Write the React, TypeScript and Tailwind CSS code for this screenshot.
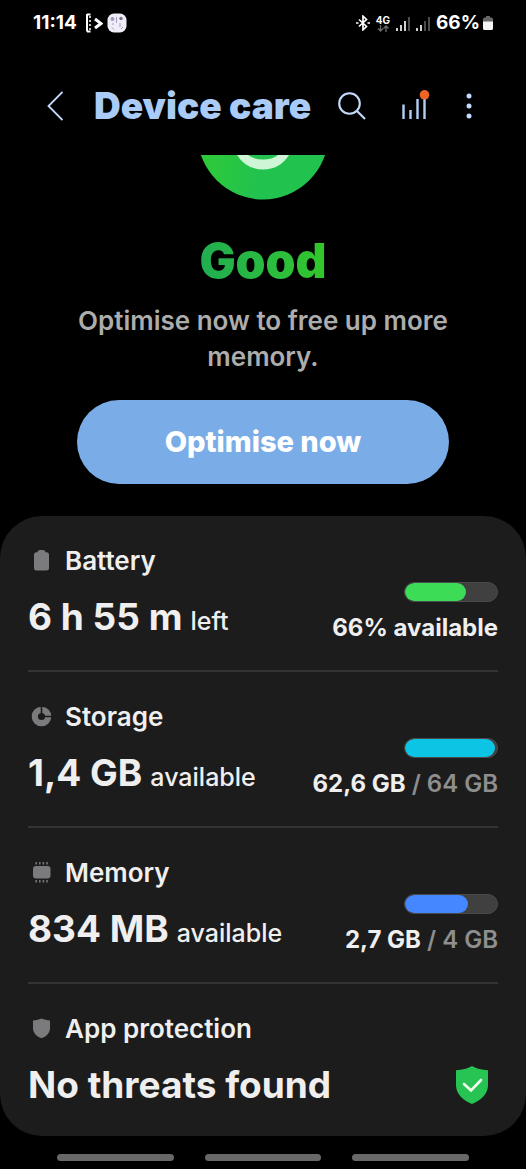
import type { ReactNode } from "react";

const ROWS = [
  {
    title: "Battery",
    icon: <BatteryIcon />,
    value: "6 h 55 m",
    unit: "left",
    percent: 66,
    bar: "bg-[#3ddc57]",
    used: "66% available",
    total: "",
  },
  {
    title: "Storage",
    icon: <StorageIcon />,
    value: "1,4 GB",
    unit: "available",
    percent: 98,
    bar: "bg-[#0cc4e4]",
    used: "62,6 GB",
    total: " / 64 GB",
  },
  {
    title: "Memory",
    icon: <MemoryIcon />,
    value: "834 MB",
    unit: "available",
    percent: 69,
    bar: "bg-[#4587ff]",
    used: "2,7 GB",
    total: " / 4 GB",
  },
];

function BatteryIcon() {
  return (
    <svg viewBox="0 0 24 24" className="size-6" fill="#7b7b7d">
      <path d="M8.500 3.200C8.800 1.900 9.600 1 11 1h3c1.400 0 2.200.900 2.500 2.200h1A2.500 2.500 0 0 1 20 5.700v13.300a2.500 2.500 0 0 1-2.500 2.500h-10A2.500 2.500 0 0 1 5 19V5.700a2.500 2.500 0 0 1 2.500-2.500Z" />
    </svg>
  );
}

function StorageIcon() {
  return (
    <svg viewBox="0 0 24 24" className="size-6" fill="none">
      <circle cx="12.500" cy="11.500" r="6.700" stroke="#7b7b7d" strokeWidth="6.200" />
      <path d="M12.500 11.500V1M12.500 11.500H23" stroke="#1c1c1c" strokeWidth="1.600" />
    </svg>
  );
}

function MemoryIcon() {
  return (
    <svg viewBox="0 0 24 24" className="size-6" fill="#7b7b7d">
      <rect x="4" y="5" width="17.500" height="12.500" rx="3" />
      <path
        d="M7.200 1v2.500M10.800 1v2.500M14.400 1v2.500M18 1v2.500M7.200 19v2.500M10.800 19v2.500M14.400 19v2.500M18 19v2.500"
        stroke="#7b7b7d"
        strokeWidth="1.500"
      />
    </svg>
  );
}

function ShieldIcon() {
  return (
    <svg viewBox="0 0 24 24" className="size-6" fill="#7b7b7d">
      <path d="M12.500 1.500c2.600 1.100 5.200 1.700 8.500 2v7.700c0 4.800-3.800 8.300-8.500 10.100C7.800 19.500 4 16 4 11.200V3.500c3.300-.3 5.900-.9 8.500-2Z" />
    </svg>
  );
}

function SignalIcon({ strong = false }: { strong?: boolean }) {
  return (
    <svg viewBox="0 0 14 15" className="h-[15px] w-[14px]" strokeWidth="1.800">
      <path d="M1 15v-3M5 15V9" stroke="#e8e8e8" />
      <path d="M9 15V5" stroke={strong ? "#e8e8e8" : "#555"} />
      <path d="M13 15V1" stroke="#555" />
    </svg>
  );
}

function StatusBar() {
  return (
    <div className="flex h-[46px] items-center justify-between px-[33px] text-white">
      <div className="flex items-center gap-2">
        <span className="text-[19px] font-bold">11:14</span>
        <div className="flex items-center gap-1">
          <svg viewBox="0 0 18 20" className="h-5 w-[18px]" fill="none" stroke="#fff">
            <path d="M2 1v17.500M2 1.500h3.500M2 18.500h3.500" strokeWidth="2" />
            <path d="M5 3v14" strokeWidth="1.500" strokeDasharray="2 2" />
            <path d="m10 6 6 4.500-6 4.500" strokeWidth="3" />
          </svg>
          <svg viewBox="0 0 20 20" className="size-5">
            <rect x="0.500" y="0.500" width="19" height="19" rx="6.500" fill="#f1edf8" />
            <circle cx="5.500" cy="6" r="2" fill="#a39cb8" />
            <circle cx="14" cy="5.500" r="1.700" fill="#77738a" />
            <path d="M9.500 4v6M13 10v4M5 14.500l2 2M14 16l2-2M5 11h2" stroke="#a39cb8" fill="none" />
          </svg>
        </div>
      </div>
      <div className="flex items-center gap-[6px]">
        <svg viewBox="0 0 14 16" className="h-4 w-[14px]" fill="none" stroke="#fff" strokeWidth="1.700">
          <path d="m3 4.500 7.500 7L7 14.800V1.200l3.500 3.300-7.500 7" />
          <path d="M0 8h2.500M11.500 8H14" />
        </svg>
        <div className="flex flex-col items-center">
          <span className="text-[10px] leading-[10px] font-bold">4G</span>
          <svg viewBox="0 0 12 7" className="h-[7px] w-3" fill="none" stroke="#6b6b6b" strokeWidth="1.300">
            <path d="M3.500 0v6M1 3.500l2.500 2.500L6 3.500M9 7V1M6.500 3.500 9 1l2.500 2.500" />
          </svg>
        </div>
        <SignalIcon strong />
        <SignalIcon />
        <div className="flex items-center gap-[3px]">
          <span className="text-[19px] font-bold">66%</span>
          <svg viewBox="0 0 10 14" className="h-[14px] w-[10px]">
            <path d="M3 0h4v1.500h1.500A1.500 1.500 0 0 1 10 3v3H0V3a1.500 1.500 0 0 1 1.500-1.500H3Z" fill="#666" />
            <path d="M0 5.500h10v7A1.500 1.500 0 0 1 8.500 14h-7A1.500 1.500 0 0 1 0 12.500Z" fill="#f4f4f4" />
          </svg>
        </div>
      </div>
    </div>
  );
}

function Header() {
  return (
    <header className="flex h-[109px] items-center pt-[10px] pr-[54px] pl-[47px]">
      <button aria-label="Back" className="w-[47px]">
        <svg viewBox="0 0 16 30" className="h-[30px] w-4" fill="none" stroke="#c3dafa" strokeWidth="1.800">
          <path d="M15.500 1 1.500 15l14 14" />
        </svg>
      </button>
      <h1 className="flex-1 text-[37px] font-black whitespace-nowrap text-[#a9cbf6]">Device care</h1>
      <div className="flex items-center gap-9">
        <button aria-label="Search">
          <svg viewBox="0 0 28 28" className="size-7" fill="none" stroke="#c3dafa" strokeWidth="2.100">
            <circle cx="11.500" cy="11.500" r="10.300" />
            <path d="m19 19 8 8" />
          </svg>
        </button>
        <button aria-label="Usage">
          <svg viewBox="0 0 28 32" className="h-8 w-7" fill="none" stroke="#b4cff5" strokeWidth="2.400">
            <path d="M1.500 29V14.500M8.500 29v-9M15.500 29V9M22.500 29V7" />
            <circle cx="22.500" cy="4.800" r="4.800" fill="#ee6425" stroke="none" />
          </svg>
        </button>
        <button aria-label="More options">
          <svg viewBox="0 0 6 28" className="h-7 w-[6px]" fill="#c3dafa">
            <circle cx="3" cy="4" r="2.500" />
            <circle cx="3" cy="14" r="2.500" />
            <circle cx="3" cy="24" r="2.500" />
          </svg>
        </button>
      </div>
    </header>
  );
}

type SectionProps = {
  title: string;
  icon: ReactNode;
  value: string;
  unit?: string;
  children: ReactNode;
};

function Section({ title, icon, value, unit, children }: SectionProps) {
  return (
    <section className="flex items-end justify-between border-b-2 border-[#343434] pt-[29px] pb-[26px] last:border-b-0 last:pb-6">
      <div>
        <div className="flex items-center gap-3 pl-px">
          {icon}
          <h2 className="text-[26px] leading-8 font-semibold text-[#efefef]">{title}</h2>
        </div>
        <p className="mt-4 mb-[3px] flex items-baseline gap-2 text-[37px] leading-[48px] font-bold whitespace-nowrap text-[#efefef]">
          {value}
          {unit && <span className="text-[25px] leading-8 font-medium">{unit}</span>}
        </p>
      </div>
      {children}
    </section>
  );
}

export default function App() {
  return (
    <div className="min-h-screen bg-black font-['Inter',sans-serif]">
      <StatusBar />
      <Header />

      <main>
        <div className="flex flex-col items-center px-16 text-center">
          {/* Status face, scrolled half under the header */}
          <svg viewBox="0 0 126 45" className="h-[45px] w-[126px]">
            <defs>
              <linearGradient id="face" x1="0" x2="1" y1="0" y2="0.200">
                <stop offset="0" stopColor="#34cd2f" />
                <stop offset="0.600" stopColor="#22c24e" />
                <stop offset="1" stopColor="#22c24e" />
              </linearGradient>
            </defs>
            <circle cx="63" cy="-21" r="65.500" fill="url(#face)" />
            <path d="M37 0Q46 14.500 63 14.500T89 0H78Q72 4.500 63 4.500T48 0Z" fill="#cef5d6" />
          </svg>
          <p className="mt-8 bg-linear-to-r from-[#21ad50] to-[#32c828] bg-clip-text text-5xl leading-[58px] font-black text-transparent">
            Good
          </p>
          <p className="mt-[13px] text-[26px] leading-9 font-semibold text-[#adadad]">
            Optimise now to free up more memory.
          </p>
        </div>
        <div className="mt-[25px] px-[77px]">
          <button className="h-[84px] w-full rounded-full bg-[#7aade7] text-[29px] font-extrabold text-white">
            Optimise now
          </button>
        </div>

        <div className="mt-8 rounded-[42px] bg-[#1c1c1c] px-7">
          {ROWS.map((row) => (
            <Section key={row.title} title={row.title} icon={row.icon} value={row.value} unit={row.unit}>
              <div className="flex flex-col items-end gap-[10px]">
                <div className="h-5 w-[94px] overflow-hidden rounded-full border border-[#4a4a4a] bg-[#404040]">
                  <div className={`h-full rounded-full ${row.bar}`} style={{ width: `${row.percent}%` }} />
                </div>
                <p className="text-2xl leading-8 font-bold whitespace-pre text-[#efefef]">
                  {row.used}
                  <span className="font-semibold text-[#8e8e8e]">{row.total}</span>
                </p>
              </div>
            </Section>
          ))}
          <Section title="App protection" icon={<ShieldIcon />} value="No threats found">
            <svg viewBox="0 0 32 38" className="mr-[10px] mb-2 h-[38px] w-8">
              <path d="M16 0c4.500 2.700 9.500 3.800 16 4.300V19c0 9-7 15.500-16 19C7 34.500 0 28 0 19V4.300C6.500 3.800 11.500 2.700 16 0Z" fill="#28c453" />
              <path d="m8 18 7 6.500L25 14" fill="none" stroke="#f2fff0" strokeWidth="2.600" strokeLinecap="round" />
            </svg>
          </Section>
        </div>
      </main>

      <div className="flex gap-[31px] px-[57px] pt-[18px] pb-2">
        <div className="h-[7px] flex-1 rounded-full bg-[#686868]" />
        <div className="h-[7px] flex-1 rounded-full bg-[#686868]" />
        <div className="h-[7px] flex-1 rounded-full bg-[#686868]" />
      </div>
    </div>
  );
}
